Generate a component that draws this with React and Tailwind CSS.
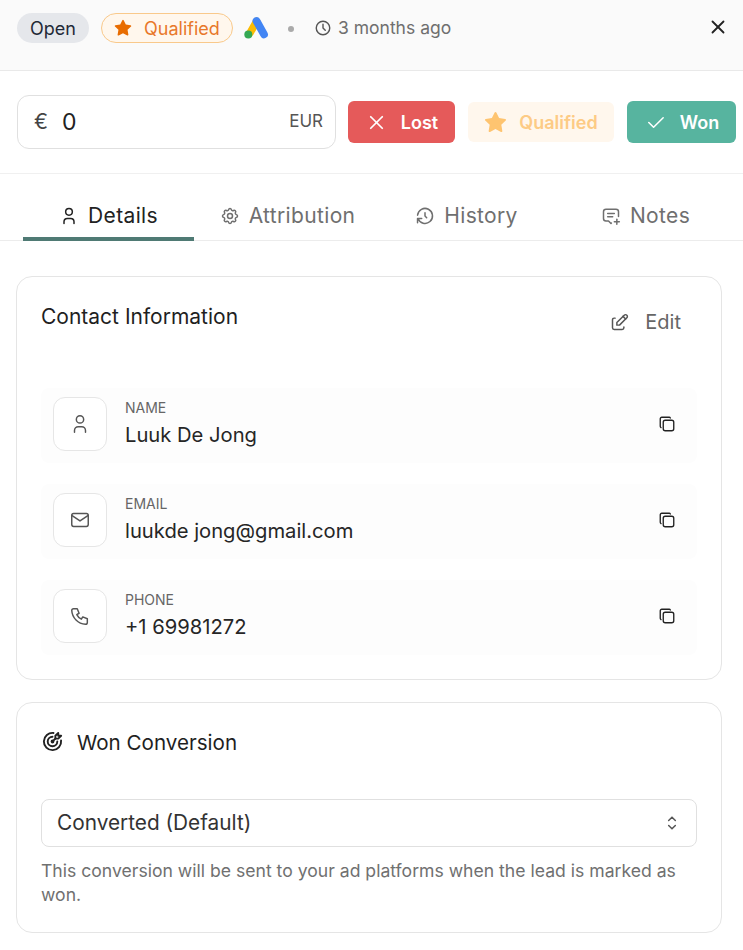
import React from "react";
import {
  TbUser, TbSettings, TbHistory, TbMessage2Plus, TbEdit, TbMail, TbPhone, TbCopy,
  TbStarFilled, TbClock, TbX, TbCheck, TbSelector, TbTargetArrow,
} from "react-icons/tb";

function AdsLogo() {
  return (
    <svg width="26" height="24" viewBox="0 0 26 24" className="shrink-0">
      <path d="M6 17 L12.5 5.5" stroke="#fbbc04" strokeWidth="7.6" strokeLinecap="round" />
      <path d="M12.5 5 L20 18.4" stroke="#4285f4" strokeWidth="7.8" strokeLinecap="round" />
      <circle cx="4.3" cy="18.6" r="4" fill="#34a853" />
    </svg>
  );
}

function Tab({ icon: Icon, label, active }) {
  return (
    <div
      className={`flex h-[67px] w-[171px] items-center justify-center gap-[9px] border-b-[4px] pt-[21px] text-[21px] tracking-[0.35px] ${
        active ? "border-[#4f7a74] text-[#222222]" : "border-transparent text-[#6f6f6f]"
      }`}
    >
      <Icon size={20} strokeWidth={1.8} />
      <span>{label}</span>
    </div>
  );
}

function Row({ icon: Icon, label, value }) {
  return (
    <div className="flex h-[75px] items-start rounded-lg bg-[#fdfdfd] pl-3 pr-[21px] pt-[9px]">
      <div className="flex h-[54px] w-[54px] shrink-0 items-center justify-center rounded-xl border border-[#e6e6e6] bg-white text-[#555555]">
        <Icon size={22} strokeWidth={1.6} />
      </div>
      <div className="ml-[18px] flex-1">
        <div className="text-[14px] leading-[22px] text-[#666666]">{label}</div>
        <div className="text-[20.2px] leading-[32px] text-[#262626]">{value}</div>
      </div>
      <div className="mt-[18px] text-[#222222]">
        <TbCopy size={18} strokeWidth={1.8} />
      </div>
    </div>
  );
}

export default function App() {
  return (
    <div className="h-[950px] w-[743px] overflow-hidden bg-white font-['Inter',sans-serif] text-[#222222]">
      <header className="flex h-[71px] items-start border-b border-[#e9e9e9] bg-[#fafafa] pl-[17px] pr-[14px] pt-[13px]">
        <div className="flex h-[30px] w-[72px] items-center justify-center rounded-full bg-[#e5e7eb] text-[18px] text-[#1f2937]">
          Open
        </div>
        <div className="ml-3 flex h-[30px] w-[132px] items-center justify-center gap-[12px] rounded-full border border-[#f9c98b] bg-[#fff7ed] text-[18px] text-[#e8782a]">
          <TbStarFilled size={18} className="text-[#e86c00]" />
          <span>Qualified</span>
        </div>
        <div className="ml-[11px] mt-[3px]"><AdsLogo /></div>
        <div className="ml-[18px] mt-[13px] h-[6px] w-[6px] rounded-full bg-[#aaaaaa]" />
        <div className="ml-[20px] flex h-[30px] items-center gap-[6px] text-[17.5px] text-[#6f6f6f]">
          <TbClock size={18} strokeWidth={1.9} className="text-[#555555]" />
          <span>3 months ago</span>
        </div>
        <div className="ml-auto mt-[3px] text-[#222222]">
          <TbX size={22} strokeWidth={2} />
        </div>
      </header>

      <section className="flex h-[103px] items-start border-b border-[#f0f0f0] pl-[17px] pt-[24px]">
        <div className="flex h-[54px] w-[319px] items-center rounded-xl border border-[#e0e0e0] bg-white pl-[16px] pr-[12px]">
          <span className="text-[21px] text-[#444444]">€</span>
          <span className="ml-[14px] text-[23px] text-[#222222]">0</span>
          <span className="ml-auto text-[17px] text-[#555555]">EUR</span>
        </div>
        <div className="ml-3 mt-[6px] flex h-[42px] w-[107px] items-center justify-center gap-[13px] rounded-md bg-[#e55a5a] text-[18px] font-semibold text-white">
          <TbX size={23} strokeWidth={1.8} />
          <span>Lost</span>
        </div>
        <div className="ml-[13px] mt-[7px] flex h-[40px] w-[146px] items-center justify-center gap-[12px] rounded-md bg-[#fff7ed] text-[18px] font-semibold text-[#fdcb85]">
          <TbStarFilled size={23} className="text-[#fec470]" />
          <span>Qualified</span>
        </div>
        <div className="ml-[13px] mt-[6px] flex h-[42px] w-[109px] items-center justify-center gap-[13px] rounded-md bg-[#57b49f] text-[18px] font-semibold text-white">
          <TbCheck size={23} strokeWidth={1.6} />
          <span>Won</span>
        </div>
      </section>

      <nav className="flex h-[67px] items-stretch gap-2 border-b border-[#ececec] pl-[23px]">
        <Tab icon={TbUser} label="Details" active />
        <Tab icon={TbSettings} label="Attribution" />
        <Tab icon={TbHistory} label="History" />
        <Tab icon={TbMessage2Plus} label="Notes" />
      </nav>

      <main className="flex flex-col gap-[22px] pl-[16px] pr-[21px] pt-[35px]">
        <section className="h-[404px] rounded-2xl border border-[#e5e5e5] bg-white px-[24px] pt-[24px]">
          <div className="flex h-[87px] items-start justify-between">
            <h2 className="text-[21px] font-normal leading-[31px] text-[#1f1f1f]">Contact Information</h2>
            <div className="mr-[16px] mt-[6px] flex items-center gap-[15px] text-[20px] text-[#666666]">
              <TbEdit size={21} strokeWidth={1.7} className="text-[#555555]" />
              <span>Edit</span>
            </div>
          </div>
          <div className="flex flex-col gap-[21px]">
            <Row icon={TbUser} label="NAME" value="Luuk De Jong" />
            <Row icon={TbMail} label="EMAIL" value="luukde jong@gmail.com" />
            <Row icon={TbPhone} label="PHONE" value="+1 69981272" />
          </div>
        </section>

        <section className="h-[231px] rounded-2xl border border-[#e5e5e5] bg-white px-[24px] pt-[24px]">
          <div className="flex h-[72px] items-start gap-[13px]">
            <TbTargetArrow size={23} strokeWidth={2} className="mt-[3px] text-[#222222]" />
            <h2 className="text-[20.6px] font-normal leading-[31px] text-[#1f1f1f]">Won Conversion</h2>
          </div>
          <div className="flex h-[48px] items-center justify-between rounded-lg border border-[#e0e0e0] bg-white pl-[15px] pr-[14px] text-[20.8px] text-[#333333]">
            <span>Converted (Default)</span>
            <TbSelector size={20} strokeWidth={1.8} className="text-[#555555]" />
          </div>
          <p className="mt-[12px] text-[17.6px] leading-[24px] text-[#707070]">
            This conversion will be sent to your ad platforms when the lead is marked as won.
          </p>
        </section>
      </main>
    </div>
  );
}
